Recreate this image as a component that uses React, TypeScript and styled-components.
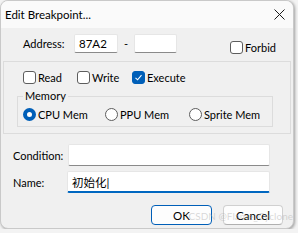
import styled, { createGlobalStyle } from "styled-components";

const Global = createGlobalStyle`
  html, body {
    margin: 0;
    padding: 0;
    background: #f3f3f3;
  }
  body {
    font-family: Lato, "Noto Sans CJK SC", sans-serif;
    font-size: 11px;
    color: #000;
  }
`;

const S = {
  Window: styled.div`
    width: 294px;
    height: 229px;
    box-sizing: border-box;
    border: 1px solid #c9c9c9;
    border-radius: 8px;
    overflow: hidden;
    background: #f0f0f0;
    box-shadow: 1px 1px 3px rgba(0, 0, 0, 0.35);
    display: flex;
    flex-direction: column;
    position: relative;
  `,
  TitleBar: styled.div`
    height: 27px;
    background: #fafafa;
    display: flex;
    align-items: center;
    justify-content: space-between;
    padding: 0 8px 0 4px;
    flex-shrink: 0;
  `,
  Title: styled.span`
    font-size: 11.5px;
  `,
  Body: styled.div`
    display: flex;
    flex-direction: column;
    padding: 6px 0 0 1px;
  `,
  AddressRow: styled.div`
    display: flex;
    align-items: center;
    height: 19px;
    padding-left: 21px;
  `,
  Label: styled.span<{ $w?: number }>`
    width: ${(p) => (p.$w ? `${p.$w}px` : "auto")};
    white-space: nowrap;
  `,
  TextBox: styled.div<{ $w: number; $h?: number; $focus?: boolean }>`
    width: ${(p) => p.$w}px;
    height: ${(p) => p.$h ?? 19}px;
    box-sizing: border-box;
    background: #fff;
    border: 1px solid #e6e6e6;
    border-bottom: ${(p) => (p.$focus ? "2px solid #0067c0" : "1px solid #8a8a8a")};
    border-radius: 2px;
    display: flex;
    align-items: center;
    padding-left: 4px;
    font-size: 11.5px;
  `,
  Dash: styled.span`
    width: 16px;
    text-align: center;
  `,
  Spacer: styled.div`
    flex: 1;
  `,
  Check: styled.label<{ $w?: number }>`
    display: flex;
    align-items: center;
    gap: 2px;
    white-space: nowrap;
    width: ${(p) => (p.$w ? `${p.$w}px` : "auto")};
  `,
  Box: styled.span<{ $on?: boolean }>`
    width: 13px;
    height: 13px;
    box-sizing: border-box;
    border-radius: 3px;
    border: 1px solid ${(p) => (p.$on ? "#005fb8" : "#5d5d5d")};
    background: ${(p) => (p.$on ? "#005fb8" : "#fff")};
    display: flex;
    align-items: center;
    justify-content: center;
  `,
  Radio: styled.span<{ $on?: boolean }>`
    width: 13px;
    height: 13px;
    box-sizing: border-box;
    border-radius: 50%;
    border: ${(p) => (p.$on ? "4px solid #005fb8" : "1px solid #5d5d5d")};
    background: #fff;
  `,
  Group: styled.div`
    margin: 8px 2px 0 1px;
    border: 1px solid #dcdcdc;
    height: 73px;
    box-sizing: border-box;
    padding: 9px 0 0 19px;
  `,
  AccessRow: styled.div`
    display: flex;
    align-items: center;
    height: 13px;
  `,
  Memory: styled.div`
    position: relative;
    margin: 12px 17px 0 -6px;
    padding: 11px 0 0 5px;
    border: 1px solid #dcdcdc;
    height: 31px;
    box-sizing: border-box;
  `,
  Legend: styled.span`
    position: absolute;
    left: 5px;
    top: -8px;
    padding: 0 2px;
    background: #f0f0f0;
    line-height: 14px;
  `,
  RadioRow: styled.div`
    display: flex;
    align-items: center;
    height: 13px;
  `,
  FieldRow: styled.div<{ $mt: number }>`
    display: flex;
    align-items: center;
    margin-top: ${(p) => p.$mt}px;
    padding-left: 11px;
  `,
  Buttons: styled.div`
    display: flex;
    justify-content: flex-end;
    gap: 11px;
    margin-top: 12px;
    padding-right: 10px;
  `,
  Button: styled.div<{ $def?: boolean }>`
    width: ${(p) => (p.$def ? 61 : 60)}px;
    height: 20px;
    box-sizing: border-box;
    border-radius: 4px;
    background: #fdfdfd;
    border: 1px solid ${(p) => (p.$def ? "#005fb8" : "#d0d0d0")};
    border-bottom-color: ${(p) => (p.$def ? "#005fb8" : "#b0b0b0")};
    display: flex;
    align-items: center;
    justify-content: center;
    font-size: 11.5px;
  `,
  Watermark: styled.div`
    position: absolute;
    right: 0;
    bottom: 6px;
    font-size: 10px;
    color: rgba(170, 170, 170, 0.45);
    white-space: nowrap;
    pointer-events: none;
  `,
};

const CheckMark = () => (
  <svg width="9" height="9" viewBox="0 0 9 9">
    <path d="M1.5 4.8 L3.6 6.8 L7.5 2.2" fill="none" stroke="#fff" strokeWidth="1.1" />
  </svg>
);

const CloseIcon = () => (
  <svg width="11" height="11" viewBox="0 0 11 11">
    <path d="M0.5 0.5 L10.5 10.5 M10.5 0.5 L0.5 10.5" stroke="#1a1a1a" strokeWidth="1" />
  </svg>
);

export default function App() {
  return (
    <>
      <Global />
      <S.Window>
        <S.TitleBar>
          <S.Title>Edit Breakpoint...</S.Title>
          <CloseIcon />
        </S.TitleBar>
        <S.Body>
          <S.AddressRow>
            <S.Label $w={51}>Address:</S.Label>
            <S.TextBox $w={44}>87A2</S.TextBox>
            <S.Dash>-</S.Dash>
            <S.TextBox $w={43} />
            <S.Spacer />
            <S.Check style={{ marginRight: 17, marginTop: 8 }}>
              <S.Box />
              Forbid
            </S.Check>
          </S.AddressRow>
          <S.Group>
            <S.AccessRow>
              <S.Check $w={54}>
                <S.Box />
                Read
              </S.Check>
              <S.Check $w={55}>
                <S.Box />
                Write
              </S.Check>
              <S.Check>
                <S.Box $on>
                  <CheckMark />
                </S.Box>
                Execute
              </S.Check>
            </S.AccessRow>
            <S.Memory>
              <S.Legend>Memory</S.Legend>
              <S.RadioRow>
                <S.Check $w={82}>
                  <S.Radio $on />
                  CPU Mem
                </S.Check>
                <S.Check $w={84}>
                  <S.Radio />
                  PPU Mem
                </S.Check>
                <S.Check>
                  <S.Radio />
                  Sprite Mem
                </S.Check>
              </S.RadioRow>
            </S.Memory>
          </S.Group>
          <S.FieldRow $mt={10}>
            <S.Label $w={55}>Condition:</S.Label>
            <S.TextBox $w={202} $h={22} />
          </S.FieldRow>
          <S.FieldRow $mt={5}>
            <S.Label $w={54}>Name:</S.Label>
            <S.TextBox $w={203} $h={22} $focus>
              初始化|
            </S.TextBox>
          </S.FieldRow>
          <S.Buttons>
            <S.Button $def>OK</S.Button>
            <S.Button>Cancel</S.Button>
          </S.Buttons>
        </S.Body>
        <S.Watermark>CSDN @Flame_Cyclone</S.Watermark>
      </S.Window>
    </>
  );
}
